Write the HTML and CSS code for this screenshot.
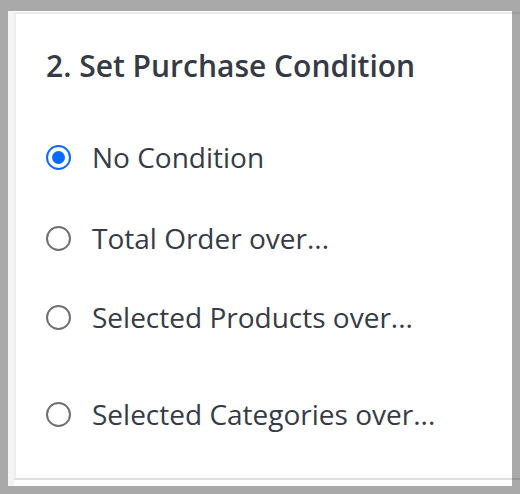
FILE: index.html
```html
<!DOCTYPE html>
<html lang="en">
<head>
<meta charset="utf-8">
<title>Set Purchase Condition</title>
<link rel="stylesheet" href="styles.css">
</head>
<body>
<div class="frame">
  <div class="card">
    <div class="strip"></div>
    <section class="panel">
      <h2 class="title">2. Set Purchase Condition</h2>
      <ul class="options">
        <li class="option option-first">
          <span class="radio radio-on"><span class="dot"></span></span>
          <span class="label">No Condition</span>
        </li>
        <li class="option">
          <span class="radio"></span>
          <span class="label">Total Order over...</span>
        </li>
        <li class="option option-third">
          <span class="radio"></span>
          <span class="label">Selected Products over...</span>
        </li>
        <li class="option option-last">
          <span class="radio"></span>
          <span class="label">Selected Categories over...</span>
        </li>
      </ul>
    </section>
  </div>
  <div class="lines"></div>
</div>
</body>
</html>
```

FILE: styles.css
```css
html, body {
  margin: 0;
  padding: 0;
}
body {
  background: #a9a9a9;
  width: 520px;
  height: 494px;
  overflow: hidden;
  font-family: "Open Sans", "Noto Sans", sans-serif;
}
.frame {
  position: relative;
  box-sizing: border-box;
  height: 494px;
  padding: 11px 8px 8px 8px;
}
.card {
  display: flex;
  height: 100%;
  background: #ffffff;
}
.strip {
  width: 6px;
  flex: none;
  background: #f4f4f4;
}
.panel {
  flex: 1;
  padding: 0 0 0 30px;
  border-left: 2px solid transparent;
}
.title {
  margin: 0;
  padding-top: 36px;
  font-size: 30px;
  line-height: 38px;
  font-weight: 600;
  color: #343a46;
}
.options {
  list-style: none;
  margin: 0;
  padding: 0;
}
.option {
  display: flex;
  align-items: center;
  gap: 21px;
  height: 38px;
  margin-top: 43px;
}
.option-first {
  margin-top: 53px;
}
.option-third {
  margin-top: 41px;
}
.option-last {
  margin-top: 59px;
}
.radio {
  box-sizing: border-box;
  width: 25px;
  height: 25px;
  border-radius: 50%;
  border: 2px solid #707070;
  display: flex;
  align-items: center;
  justify-content: center;
  flex: none;
}
.radio-on {
  border-color: #0a6cff;
}
.dot {
  width: 13px;
  height: 13px;
  border-radius: 50%;
  background: #0a6cff;
}
.label {
  font-size: 28px;
  line-height: 38px;
  color: #363b47;
}
.lines {
  position: absolute;
  left: 14px;
  top: 12px;
  right: 0;
  height: 464px;
  border-left: 2px solid rgba(0, 0, 0, 0.07);
  border-top: 2px solid rgba(0, 0, 0, 0.07);
  border-bottom: 2px solid rgba(0, 0, 0, 0.12);
  pointer-events: none;
}
```
